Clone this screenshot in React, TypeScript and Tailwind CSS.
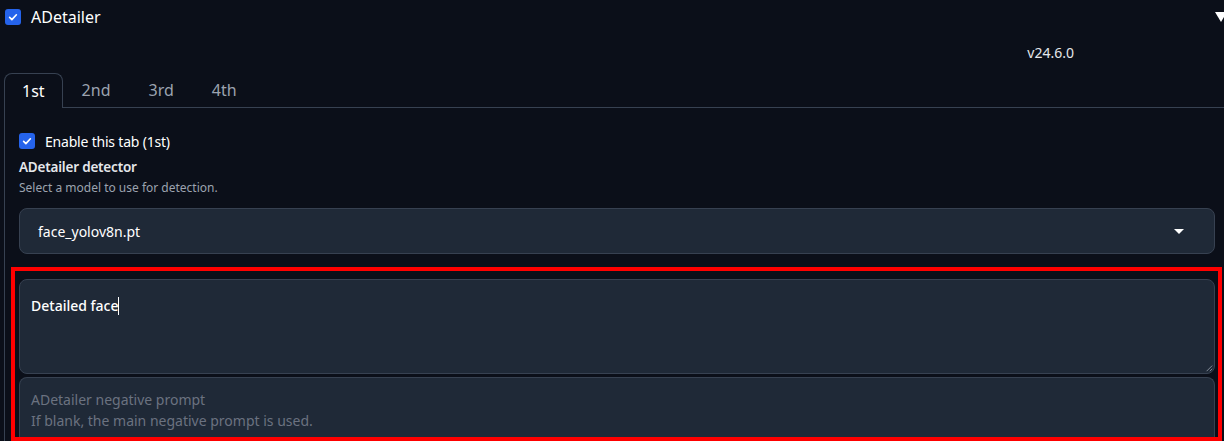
import React from "react";

const font = { fontFamily: '"Noto Sans", "Open Sans", sans-serif' };

function Check({ className }: { className?: string }) {
  return (
    <span
      className={`flex items-center justify-center w-[16px] h-[16px] rounded-[3px] bg-[#2563eb] ${className ?? ""}`}
    >
      <svg viewBox="0 0 16 16" className="w-[12px] h-[12px]">
        <path
          d="M3.5 8.5l3 3 6-6.5"
          fill="none"
          stroke="white"
          strokeWidth="2.2"
          strokeLinecap="round"
          strokeLinejoin="round"
        />
      </svg>
    </span>
  );
}

export default function App() {
  const tabs = ["1st", "2nd", "3rd", "4th"];
  return (
    <div
      className="w-[1224px] h-[441px] overflow-hidden bg-[#0b0f19] text-[#e5e7eb]"
      style={font}
    >
      <div className="flex items-center justify-between h-[34px] pl-[5px]">
        <div className="flex items-center gap-[10px]">
          <Check />
          <span className="text-[16px] text-white">ADetailer</span>
        </div>
        <div className="-mr-[3px] w-0 h-0 border-l-[6px] border-r-[6px] border-t-[10px] border-l-transparent border-r-transparent border-t-white" />
      </div>

      <div className="flex justify-end pr-[150px] h-[38px] items-center -mt-[1px]">
        <span className="text-[14px] text-[#e5e7eb]">v24.6.0</span>
      </div>

      <div className="flex pl-[4px] h-[35px] mt-[2px]">
        {tabs.map((t, i) => (
          <div
            key={t}
            className={
              i === 0
                ? "px-[17px] flex items-center justify-center border border-b-0 border-[#374151] rounded-t-[8px] text-white text-[16px]"
                : "px-[19px] flex items-center justify-center border-b border-[#374151] text-[#9ca3af] text-[16px]"
            }
          >
            {t}
          </div>
        ))}
        <div className="flex-1 border-b border-[#374151]" />
      </div>

      <div className="ml-[4px] border-l border-[#374151] pl-[14px] pr-[9px] pt-[24px]">
        <div className="flex items-center gap-[10px] h-[18px]">
          <Check />
          <span className="text-[14px] tracking-[-0.2px] text-white">Enable this tab (1st)</span>
        </div>
        <div className="mt-[7px] text-[13.5px] font-semibold text-[#e5e7eb] leading-[20px] tracking-[-0.2px]">
          ADetailer detector
        </div>
        <div className="mt-[3px] text-[12px] text-[#9ca3af] leading-[16px]">
          Select a model to use for detection.
        </div>
        <div className="mt-[12px] h-[46px] rounded-[8px] bg-[#1f2937] border border-[#374151] flex items-center justify-between pl-[18px] pr-[30px]">
          <span className="text-[14px] text-white">face_yolov8n.pt</span>
          <div className="w-0 h-0 border-l-[5px] border-r-[5px] border-t-[5px] border-l-transparent border-r-transparent border-t-white" />
        </div>

        <div className="mt-[13px] -ml-[8px] -mr-[7px] border-[4px] border-[#ff0000] pt-[8px] pl-[4px] pr-[3px] h-[174px] overflow-hidden">
          <div className="relative h-[95px] rounded-[8px] bg-[#1f2937] border border-[#374151] pl-[11px] pt-[13px]">
            <span className="text-[14px] text-white font-medium">Detailed face</span>
            <span className="inline-block w-[1px] h-[18px] bg-white align-middle -mt-[2px]" />
            <svg
              viewBox="0 0 10 10"
              className="absolute right-[1px] bottom-[1px] w-[8px] h-[8px]"
            >
              <path d="M9 2L2 9M9 6L6 9" stroke="#9ca3af" strokeWidth="1" />
            </svg>
          </div>
          <div className="mt-[3px] h-[60px] rounded-t-[8px] bg-[#1f2937] border border-b-0 border-[#374151] pl-[11px] pt-[11px] text-[14px] text-[#6b7280] leading-[21px]">
            <div>ADetailer negative prompt</div>
            <div>If blank, the main negative prompt is used.</div>
          </div>
        </div>
      </div>
    </div>
  );
}
